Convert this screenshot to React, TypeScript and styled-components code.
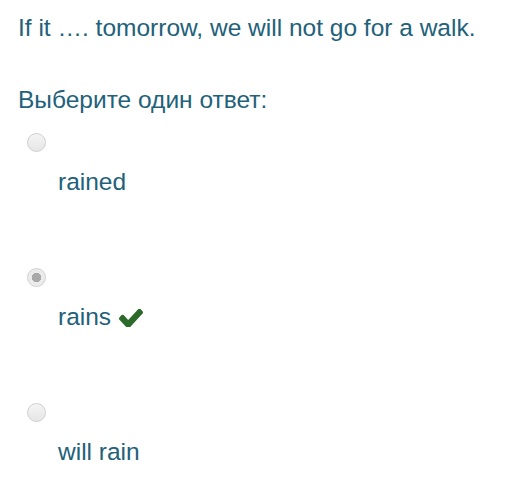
import styled, {createGlobalStyle} from "styled-components";

const GlobalStyle = createGlobalStyle`
  body {
    margin: 0;
    background: #fff;
    font-family: "Liberation Sans", Arial, sans-serif;
  }
`;

const options = [
  {label: 'rained', checked: false, correct: false},
  {label: 'rains', checked: true, correct: true},
  {label: 'will rain', checked: false, correct: false},
]

// font-awesome style check mark
const CheckIcon = () => (
  <CheckSvg viewBox="121 362 1550 1066" preserveAspectRatio="none">
    <path
      d="M1671 566q0 40-28 68l-724 724-136 136q-28 28-68 28t-68-28l-136-136-362-362q-28-28-28-68t28-68l136-136q28-28 68-28t68 28l294 295 656-657q28-28 68-28t68 28l136 136q28 28 28 68z"
      fill="#2b6a2b"/>
  </CheckSvg>
)

export default function App() {
  return (
    <Page>
      <GlobalStyle/>
      <QuestionText>If it …. tomorrow, we will not go for a walk.</QuestionText>
      <Prompt>Выберите один ответ:</Prompt>
      <Answers>
        {options.map(opt => (
          <Answer key={opt.label}>
            <Radio checked={opt.checked}/>
            <Label>
              {opt.label}
              {opt.correct && <CheckIcon/>}
            </Label>
          </Answer>
        ))}
      </Answers>
    </Page>
  );
}

const Page = styled.div`
  padding: 13px 18px;
  color: #22617a;
  font-size: 24.5px;
  line-height: 30px;
`;

const QuestionText = styled.div`
  margin-bottom: 42px;
`;

const Prompt = styled.div`
  margin-bottom: 18px;
`;

const Answers = styled.div`
  display: flex;
  flex-direction: column;
  gap: 71px;
  padding-left: 9px;
`;

const Answer = styled.div`
  display: flex;
  flex-direction: column;
  gap: 15px;
`;

const Radio = styled.span<{ checked: boolean }>`
  display: block;
  width: 19px;
  height: 19px;
  box-sizing: border-box;
  border-radius: 50%;
  border: 1px solid #d0d0d0;
  background: ${p => p.checked
    ? 'radial-gradient(circle, #a9a9a9 0 4.5px, #ececec 5px)'
    : 'linear-gradient(#f4f4f4, #e6e6e6)'};
`;

const Label = styled.div`
  display: flex;
  align-items: center;
  gap: 8px;
  padding-left: 31px;
`;

const CheckSvg = styled.svg`
  width: 24px;
  height: 18px;
  margin-top: 2px;
`;
